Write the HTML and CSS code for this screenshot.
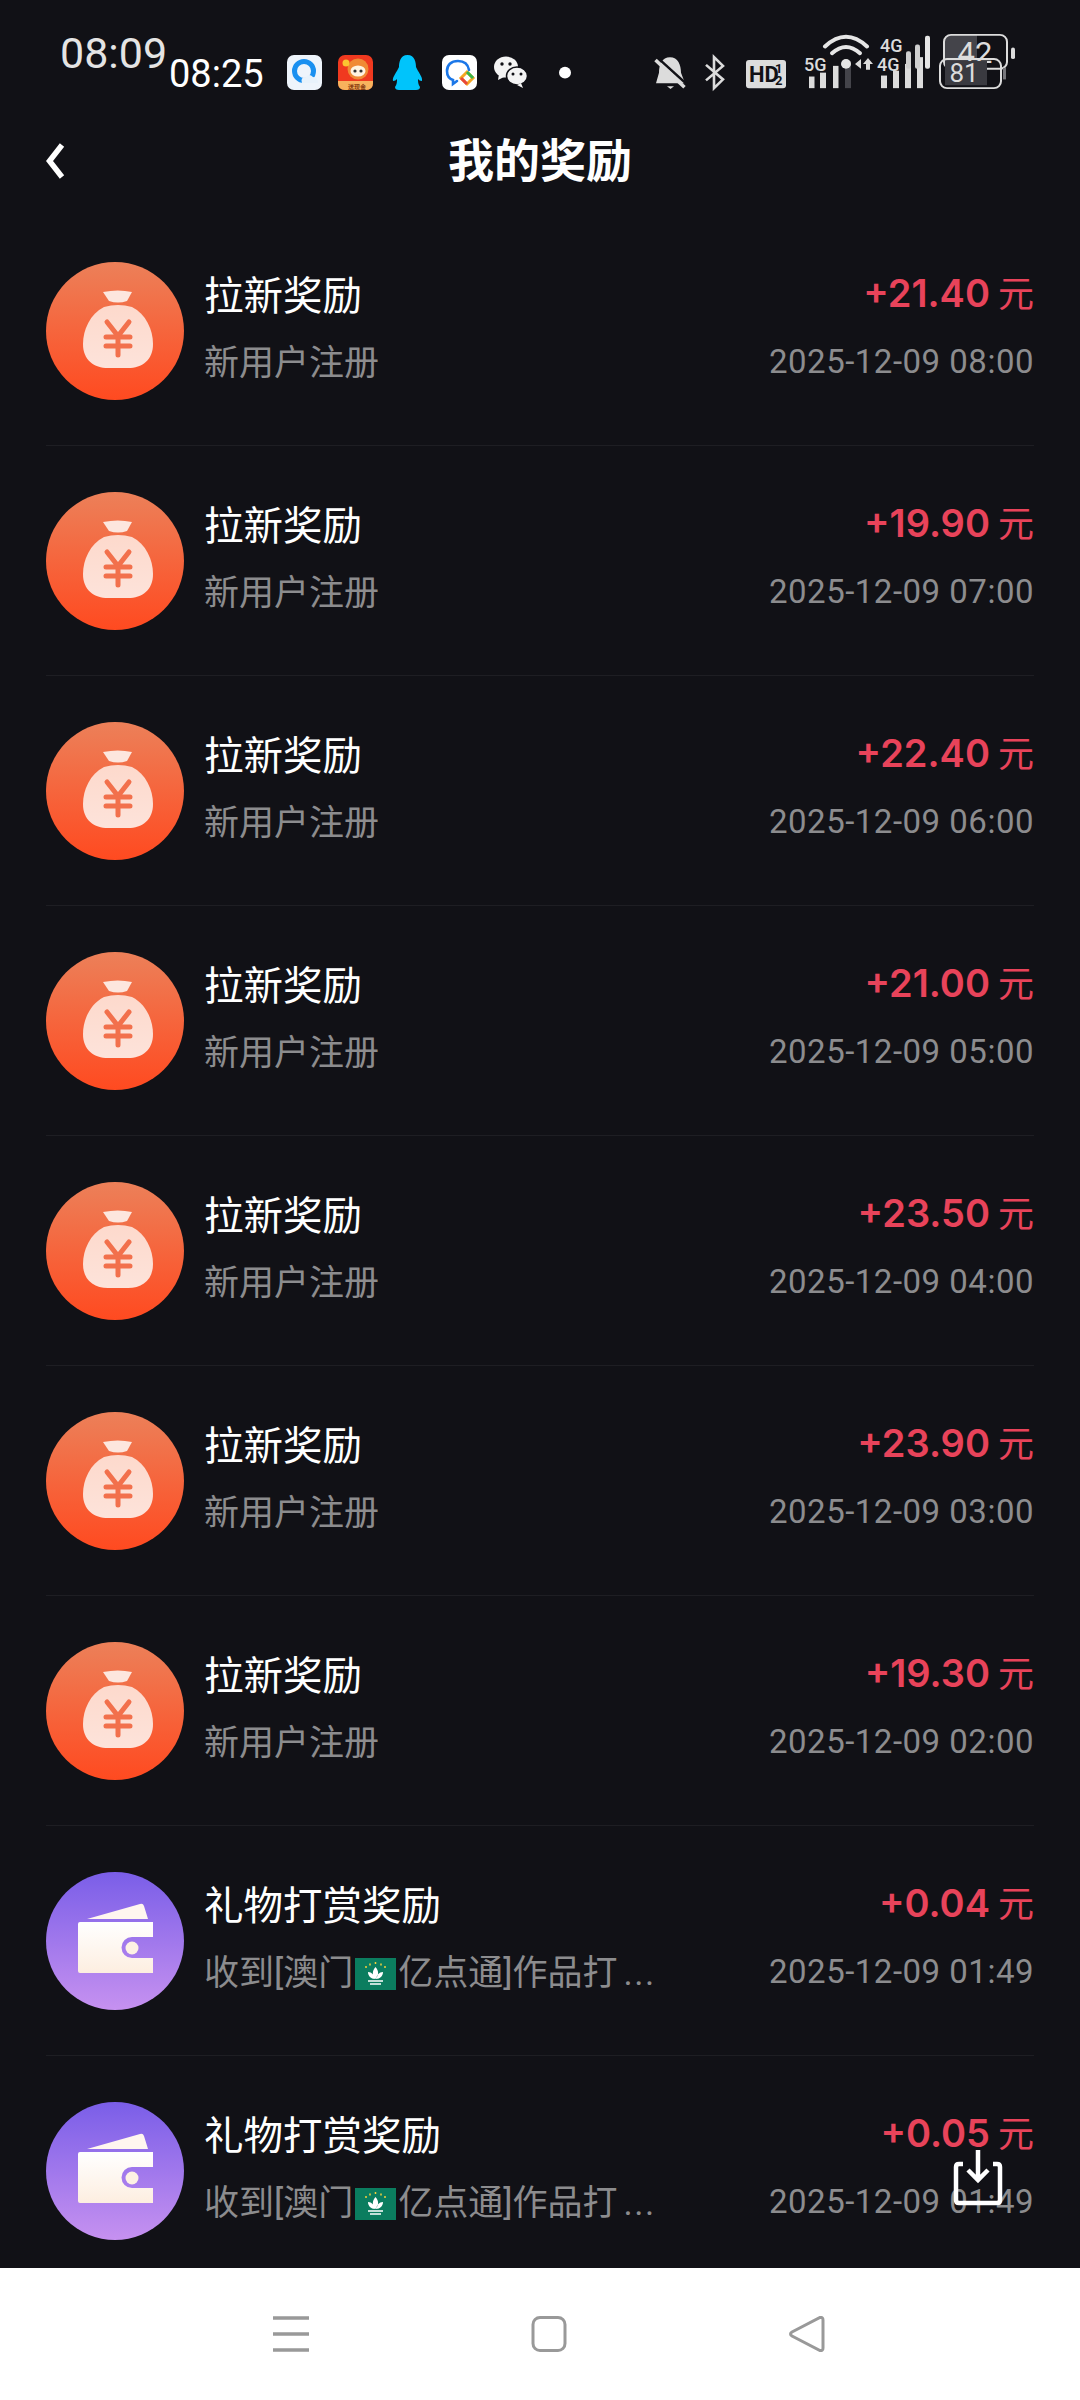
FILE: index.html
```html
<!DOCTYPE html>
<html lang="zh-CN">
<head>
  <meta charset="UTF-8">
  <meta name="viewport" content="width=device-width, initial-scale=1.0">
  <title>我的奖励</title>
  <link rel="stylesheet" href="styles.css">
</head>
<body>
  <svg class="defs" width="0" height="0">
    <defs>
      <linearGradient id="bagFill" x1="0" y1="0" x2="0" y2="1">
        <stop offset="0" stop-color="#fdd9cc"/>
        <stop offset="1" stop-color="#fde3da"/>
      </linearGradient>
      <linearGradient id="walletFill" x1="0" y1="0" x2="0" y2="1">
        <stop offset="0" stop-color="#ffffff"/>
        <stop offset="1" stop-color="#fdeee0"/>
      </linearGradient>
      <symbol id="bag" viewBox="0 0 138 138">
        <path d="M57 30 Q72 27 86 30 L81 39 Q72 42 63 39 Z" fill="#fde6de"/>
        <path d="M58 45 Q72 41 86 45 C100 52 107 68 107 82 C107 98 96 106 82 106 H62 C48 106 37 98 37 82 C37 68 44 52 58 45 Z" fill="url(#bagFill)"/>
        <path d="M61 60 L72 74 L83 60 M60 75 H84 M60 84 H84 M72 74 V93" fill="none" stroke="#f2704c" stroke-width="5" stroke-linecap="round" stroke-linejoin="round"/>
      </symbol>
      <symbol id="wallet" viewBox="0 0 138 138">
        <path d="M41 47 L94 32 Q97 31 98 34 L102 47 Z" fill="#fff6ef"/>
        <path d="M34 50 H107 V65 H86 A10.5 10.5 0 0 0 86 86 H107 V101 H34 Q32 101 32 99 V52 Q32 50 34 50 Z" fill="url(#walletFill)"/>
        <circle cx="86" cy="76" r="6.5" fill="#fdf1e4"/>
      </symbol>
      <symbol id="flag" viewBox="0 0 41 32">
        <rect width="41" height="32" fill="#0b7d5f"/>
        <path d="M20.5 9 C24 13 24 17 20.5 21 C17 17 17 13 20.5 9 Z M13 14 C17 14 19 17 20 21 C16 21 13 18 13 14 Z M28 14 C24 14 22 17 21 21 C25 21 28 18 28 14 Z" fill="#fff"/>
        <path d="M13 23 H28 M15 26 H26" stroke="#fff" stroke-width="1.6"/>
        <path d="M20.5 4 v2 M15 5.5 v2 M26 5.5 v2 M11 8 v2 M30 8 v2" stroke="#f4d13d" stroke-width="1.5"/>
      </symbol>
    </defs>
  </svg>

  <!-- status bar -->
  <div class="status-bar">
    <span class="ghost-time">08:09</span>
    <span class="time">08:25</span>
    <div class="app-icons">
      <svg viewBox="0 0 35 35"><rect width="35" height="35" rx="7" fill="#eef4fb"/><circle cx="17" cy="16" r="9.5" fill="none" stroke="#1a90f0" stroke-width="5"/><path d="M15 28 Q13 22 19 22 Q22 18 26 22 Q31 22 31 28 Z" fill="#e8f2fb"/></svg>
      <svg viewBox="0 0 35 35"><rect width="35" height="35" rx="7" fill="#f0391f"/><path d="M0 26 H35 V28 Q35 35 28 35 H7 Q0 35 0 28 Z" fill="#f8b25d"/><circle cx="20" cy="14" r="10.5" fill="#f08a35"/><ellipse cx="20" cy="16" rx="7.5" ry="5.5" fill="#fff3e0"/><circle cx="17" cy="16" r="1.6" fill="#333"/><circle cx="23" cy="16" r="1.6" fill="#333"/><circle cx="8" cy="8" r="3.5" fill="#fbc531"/><text class="app-label" x="19" y="33.5" text-anchor="middle">送现金</text></svg>
      <svg viewBox="0 0 35 35"><path d="M17.5 0 C25 0 26 8 26 12 C28 17 33 22 32 26 C30 26 29 25 28 24 C28 27 28 29 30 32 Q30 35 26 35 H9 Q5 35 5 32 C7 29 7 27 7 24 C6 25 5 26 3 26 C2 22 7 17 9 12 C9 8 10 0 17.5 0 Z" fill="#00c4fb"/></svg>
      <svg viewBox="0 0 35 35"><rect width="35" height="35" rx="7" fill="#fff"/><path d="M27 15 C26 9 22 6 16 6 C9 6 5 10 5 16 C5 21 8 24 11 25 L11 29 L15 26" fill="none" stroke="#1b77e8" stroke-width="2.6" stroke-linecap="round"/><path d="M25 17 L31 23 L25 29 L19 23 Z" fill="none" stroke="#f5a623" stroke-width="3"/><path d="M25 17 L31 23" stroke="#39b54a" stroke-width="3"/><path d="M19 23 L25 29" stroke="#e8483b" stroke-width="3"/></svg>
      <svg viewBox="0 0 35 35"><ellipse cx="13" cy="12" rx="12" ry="10.5" fill="#f4f4f4"/><path d="M6 19 L5 25 L11 22 Z" fill="#f4f4f4"/><ellipse cx="24" cy="21" rx="10.5" ry="9" stroke="#111116" stroke-width="1.5" fill="#f4f4f4"/><path d="M28 28 L30 33 L24 30 Z" fill="#f4f4f4"/><circle cx="9" cy="9" r="1.7" fill="#111116"/><circle cx="17" cy="9" r="1.7" fill="#111116"/><circle cx="20" cy="19" r="1.5" fill="#111116"/><circle cx="28" cy="19" r="1.5" fill="#111116"/></svg>
    </div>
    <svg class="sys-icons" viewBox="555 30 465 65" preserveAspectRatio="none">
      <circle cx="565" cy="74" r="6" fill="#fff"/>
      <!-- mute bell -->
      <path d="M670 58 C678 58 681 66 681 74 L685 85 H656 L659 74 C659 66 662 58 670 58 Z" fill="#dcdcdc"/>
      <path d="M667 88 h7 l-3.5 3 Z" fill="#dcdcdc"/>
      <path d="M658 59 L687 86" stroke="#111116" stroke-width="2.5"/>
      <path d="M655.500 61 L684.500 89" stroke="#dcdcdc" stroke-width="3.500"/>
      <!-- bluetooth -->
      <path d="M706 66 L723 81 L714 90 V58 L723 67 L706 82" fill="none" stroke="#dcdcdc" stroke-width="2.6"/>
      <!-- HD badge -->
      <rect x="746" y="61" width="40" height="29" rx="3" fill="#dcdcdc"/>
      <text class="hd" x="749" y="84">HD</text>
      <text class="hd-small" x="775" y="74">1</text>
      <text class="hd-small" x="775" y="87">2</text>
      <!-- sim 1 -->
      <text class="net" x="804" y="72">5G</text>
      <rect x="809" y="78" width="5.500" height="12" fill="#dcdcdc"/>
      <rect x="820" y="74" width="6" height="16" fill="#dcdcdc"/>
      <rect x="833" y="67" width="5.500" height="23" fill="#dcdcdc"/>
      <rect x="845" y="62" width="6" height="28" fill="#44444a"/>
      <!-- wifi -->
      <path d="M825 47 Q846 27 867 47" fill="none" stroke="#e6e6e6" stroke-width="4" stroke-linecap="round"/>
      <path d="M832 54 Q846 41 860 54" fill="none" stroke="#e6e6e6" stroke-width="4" stroke-linecap="round"/>
      <circle cx="846" cy="65" r="5" fill="#e6e6e6"/>
      <path d="M855 65 L861 60 V70 Z M863 65 L868 59 L873 65 H870 V71 H866 V65 Z" fill="#dcdcdc"/>
      <!-- sim 2 -->
      <text class="net" x="877" y="72">4G</text>
      <rect x="881" y="77" width="6" height="13" fill="#dcdcdc"/>
      <rect x="893" y="72" width="6" height="18" fill="#dcdcdc"/>
      <rect x="905" y="65" width="6" height="25" fill="#dcdcdc"/>
      <rect x="917" y="58" width="6" height="32" fill="#dcdcdc"/>
      <!-- ghost signal from the screenshot underneath -->
      <text class="net" x="880" y="53">4G</text>
      <rect x="906" y="52" width="5" height="18" rx="2" fill="#cfcfcf"/>
      <rect x="915" y="45" width="5" height="25" rx="2" fill="#cfcfcf"/>
      <rect x="925" y="36" width="5" height="34" rx="2" fill="#e6e6e6"/>
      <!-- ghost battery -->
      <path d="M951 35 H977 V70 H951 Q944 70 944 63 V42 Q944 35 951 35 Z" fill="#44444a"/>
      <rect x="944" y="35" width="63" height="35" rx="7" fill="none" stroke="#dcdcdc" stroke-width="2"/>
      <rect x="1011" y="48" width="4" height="12" rx="2" fill="#dcdcdc"/>
      <text class="batt-big" x="975" y="64" text-anchor="middle">42</text>
      <!-- battery -->
      <rect x="945" y="62" width="42" height="25" fill="#3a3a40"/>
      <rect x="940" y="60" width="61" height="30" rx="7" fill="none" stroke="#dcdcdc" stroke-width="2"/>
      <rect x="1003" y="69" width="3" height="12" fill="#77777c"/>
      <text class="batt" x="964" y="84" text-anchor="middle">81</text>
    </svg>
  </div>

  <!-- header -->
  <header class="page-head">
    <svg class="back" viewBox="0 0 20 36"><path d="M17 2 L4.500 18 L17 34" fill="none" stroke="#fff" stroke-width="5.500"/></svg>
    <h1>我的奖励</h1>
  </header>

  <!-- reward list -->
  <main class="list">
    <div class="row">
      <div class="badge badge-red"><svg><use href="#bag"/></svg></div>
      <div class="info"><div class="name">拉新奖励</div><div class="desc">新用户注册</div></div>
      <div class="side"><div class="amount">+21.40<span class="unit">元</span></div><div class="date">2025-12-09 08:00</div></div>
    </div>
    <div class="row">
      <div class="badge badge-red"><svg><use href="#bag"/></svg></div>
      <div class="info"><div class="name">拉新奖励</div><div class="desc">新用户注册</div></div>
      <div class="side"><div class="amount">+19.90<span class="unit">元</span></div><div class="date">2025-12-09 07:00</div></div>
    </div>
    <div class="row">
      <div class="badge badge-red"><svg><use href="#bag"/></svg></div>
      <div class="info"><div class="name">拉新奖励</div><div class="desc">新用户注册</div></div>
      <div class="side"><div class="amount">+22.40<span class="unit">元</span></div><div class="date">2025-12-09 06:00</div></div>
    </div>
    <div class="row">
      <div class="badge badge-red"><svg><use href="#bag"/></svg></div>
      <div class="info"><div class="name">拉新奖励</div><div class="desc">新用户注册</div></div>
      <div class="side"><div class="amount">+21.00<span class="unit">元</span></div><div class="date">2025-12-09 05:00</div></div>
    </div>
    <div class="row">
      <div class="badge badge-red"><svg><use href="#bag"/></svg></div>
      <div class="info"><div class="name">拉新奖励</div><div class="desc">新用户注册</div></div>
      <div class="side"><div class="amount">+23.50<span class="unit">元</span></div><div class="date">2025-12-09 04:00</div></div>
    </div>
    <div class="row">
      <div class="badge badge-red"><svg><use href="#bag"/></svg></div>
      <div class="info"><div class="name">拉新奖励</div><div class="desc">新用户注册</div></div>
      <div class="side"><div class="amount">+23.90<span class="unit">元</span></div><div class="date">2025-12-09 03:00</div></div>
    </div>
    <div class="row">
      <div class="badge badge-red"><svg><use href="#bag"/></svg></div>
      <div class="info"><div class="name">拉新奖励</div><div class="desc">新用户注册</div></div>
      <div class="side"><div class="amount">+19.30<span class="unit">元</span></div><div class="date">2025-12-09 02:00</div></div>
    </div>
    <div class="row">
      <div class="badge badge-purple"><svg><use href="#wallet"/></svg></div>
      <div class="info"><div class="name">礼物打赏奖励</div><div class="desc">收到[澳门<svg class="flag"><use href="#flag"/></svg>亿点通]作品打<span class="dots">...</span></div></div>
      <div class="side"><div class="amount">+0.04<span class="unit">元</span></div><div class="date">2025-12-09 01:49</div></div>
    </div>
    <div class="row">
      <div class="badge badge-purple"><svg><use href="#wallet"/></svg></div>
      <div class="info"><div class="name">礼物打赏奖励</div><div class="desc">收到[澳门<svg class="flag"><use href="#flag"/></svg>亿点通]作品打<span class="dots">...</span></div></div>
      <div class="side"><div class="amount">+0.05<span class="unit">元</span></div><div class="date">2025-12-09 01:49</div></div>
    </div>
  </main>

  <!-- floating save button -->
  <svg class="save" viewBox="0 0 50 58">
    <path d="M10 16 H6 Q3 16 3 19 V52 Q3 55 6 55 H44 Q47 55 47 52 V19 Q47 16 44 16 H40" fill="none" stroke="#fff" stroke-width="4.500"/>
    <path d="M25 2 V31 M15 22 L25 32 L35 22" fill="none" stroke="#fff" stroke-width="4.500"/>
  </svg>

  <!-- system nav -->
  <nav class="nav-bar">
    <svg viewBox="0 0 36 36"><path d="M0 2 H36 M0 18 H36 M0 34 H36" stroke="#999" stroke-width="3.500"/></svg>
    <svg viewBox="0 0 36 36"><rect x="2" y="1.500" width="32" height="33" rx="7" fill="none" stroke="#999" stroke-width="3"/></svg>
    <svg viewBox="0 0 36 36"><path d="M31 1.500 Q34 1 34 4 V32 Q34 35 31 34.500 L3 20 Q0 18 3 16 Z" fill="none" stroke="#999" stroke-width="3"/></svg>
  </nav>
</body>
</html>
```

FILE: styles.css
```css
* {
  box-sizing: border-box;
}
body {
  position: relative;
  display: flex;
  flex-direction: column;
  width: 1080px;
  height: 2400px;
  margin: 0;
  overflow: hidden;
  background: #111116;
  color: #fff;
  font-family: Roboto, "Noto Sans CJK SC", sans-serif;
}
.defs {
  position: absolute;
}

/* status bar */
.status-bar {
  position: relative;
  display: flex;
  align-items: flex-start;
  flex-shrink: 0;
  height: 106px;
  padding: 30px 60px 0 169px;
}
.ghost-time {
  position: absolute;
  top: 29px;
  left: 60px;
  font-size: 43px;
  line-height: 48px;
  color: #e4e4e4;
}
.time {
  margin-top: 25px;
  font-size: 38px;
  line-height: 38px;
}
.app-icons {
  display: flex;
  gap: 16.7px;
  margin: 25px 0 0 23px;
}
.app-icons svg {
  width: 35px;
  height: 35px;
}
.app-label {
  font-size: 6px;
  font-weight: 700;
  fill: #8a3a10;
}
.sys-icons {
  width: 465px;
  height: 63px;
  margin-left: auto;
}
.hd {
  font-size: 22px;
  font-weight: 700;
  fill: #111116;
}
.hd-small {
  font-size: 13px;
  font-weight: 700;
  fill: #111116;
}
.net {
  font-size: 18px;
  font-weight: 500;
  fill: #dcdcdc;
}
.batt-big {
  font-size: 31px;
  fill: #dcdcdc;
}
.batt {
  font-size: 26px;
  fill: #dcdcdc;
}

/* header */
.page-head {
  position: relative;
  display: flex;
  align-items: center;
  justify-content: center;
  flex-shrink: 0;
  height: 110px;
  padding-bottom: 8px;
}
.page-head h1 {
  margin: 0;
  font-size: 46px;
  font-weight: 700;
}
.back {
  position: absolute;
  left: 45px;
  top: 37px;
  width: 20px;
  height: 36px;
}

/* list */
.list {
  flex: 1;
  min-height: 0;
  overflow: hidden;
  padding: 0 46px;
}
.row {
  display: flex;
  height: 230px;
  padding-top: 46px;
  border-bottom: 1px solid #1e1e23;
}
.badge {
  flex-shrink: 0;
  width: 138px;
  height: 138px;
  border-radius: 50%;
}
.badge svg {
  display: block;
  width: 138px;
  height: 138px;
}
.badge-red {
  background: linear-gradient(to bottom, #ec8059, #ff4a20);
}
.badge-purple {
  background: linear-gradient(to bottom, #7a5ee8, #c691f0);
}
.info {
  margin-left: 20px;
}
.name {
  margin-top: 3px;
  font-size: 39.5px;
  line-height: 64px;
}
.desc {
  display: flex;
  align-items: center;
  margin-top: 10px;
  font-size: 35px;
  line-height: 50px;
  color: #8c8c8e;
  white-space: nowrap;
}
.flag {
  width: 41px;
  height: 32px;
  margin: 0 2px;
}
.dots {
  margin-left: 6px;
  letter-spacing: 1.5px;
}
.side {
  margin-top: -3px;
  margin-left: auto;
  text-align: right;
}
.amount {
  font-family: Inter, "Noto Sans CJK SC", sans-serif;
  font-size: 38px;
  font-weight: 600;
  line-height: 64px;
  color: #e8435a;
}
.unit {
  margin-left: 8px;
  font-family: "Noto Sans CJK SC", sans-serif;
  font-size: 36px;
  font-weight: 400;
}
.date {
  margin-top: 12px;
  font-size: 33px;
  line-height: 50px;
  letter-spacing: 0.5px;
  color: #8c8c8e;
}

/* floating button */
.save {
  position: absolute;
  top: 2148px;
  left: 953px;
  width: 50px;
  height: 58px;
}

/* nav */
.nav-bar {
  display: flex;
  justify-content: space-between;
  flex-shrink: 0;
  height: 132px;
  padding: 48px 255px 0 273px;
  background: #fff;
}
.nav-bar svg {
  width: 36px;
  height: 36px;
}
```
